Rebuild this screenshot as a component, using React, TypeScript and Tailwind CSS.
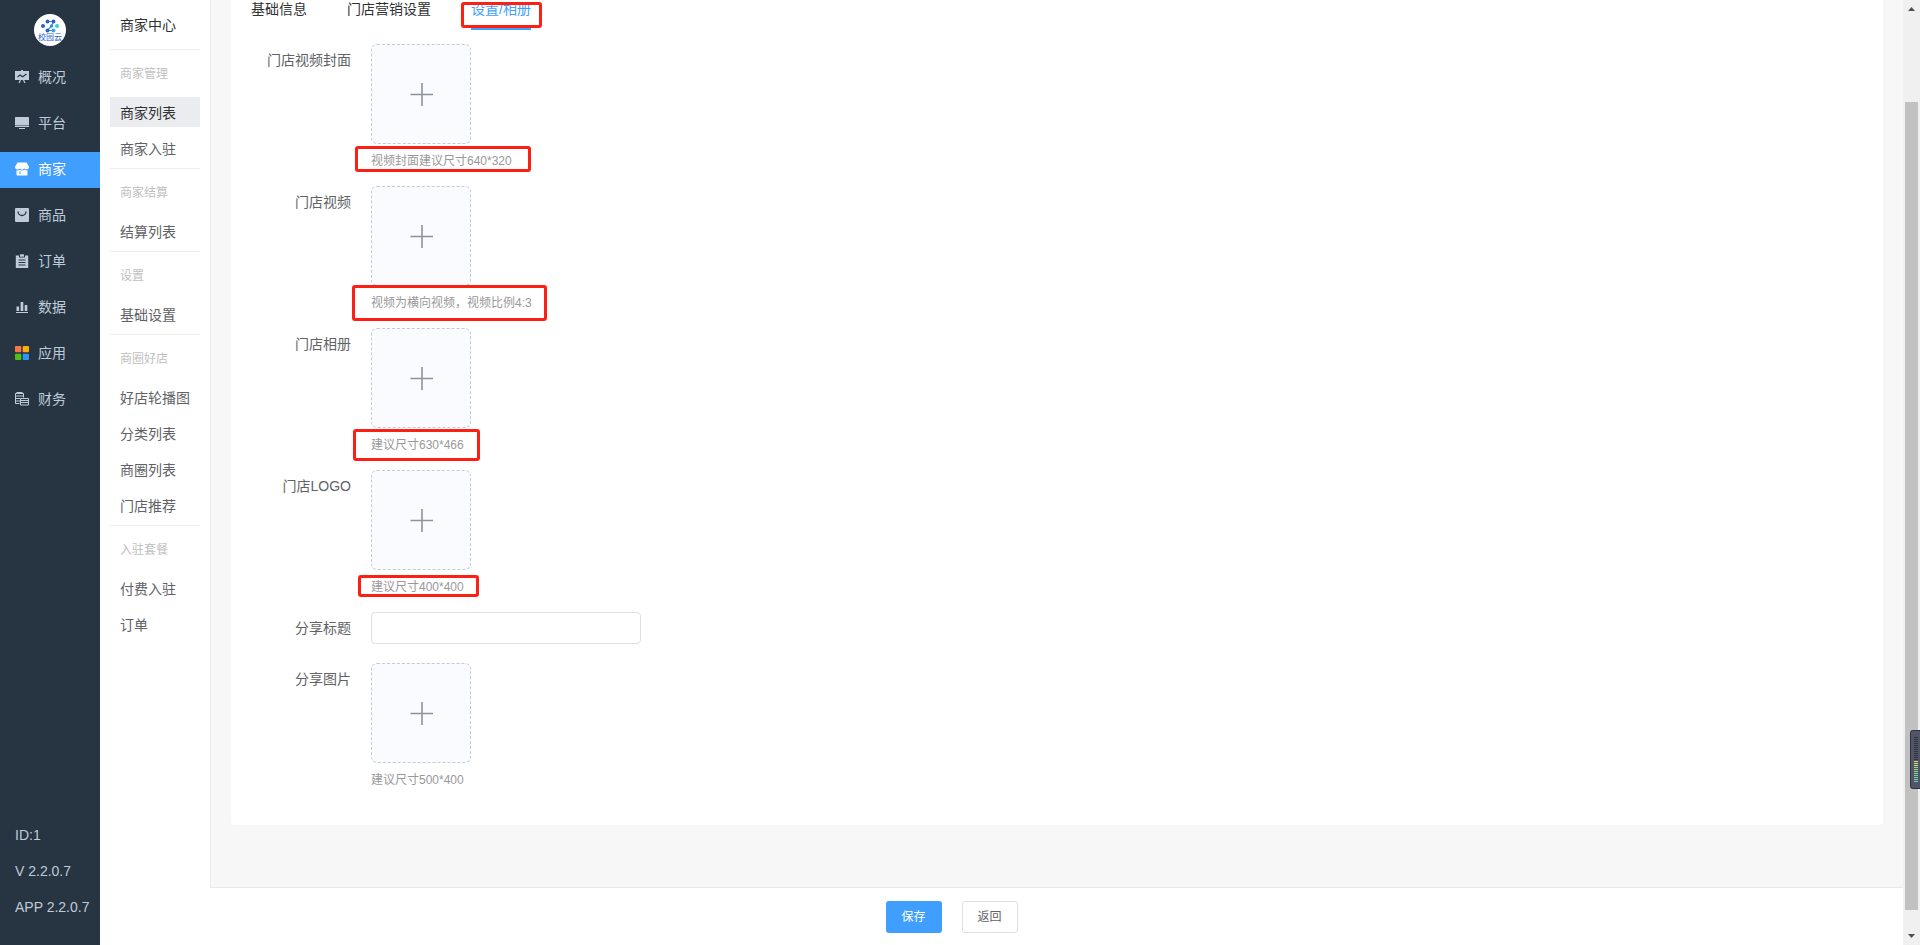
import type { ReactNode } from 'react'
import clsx from 'clsx'

const icons: Record<string, ReactNode> = {
  overview: (
    <>
      <path fill="currentColor" d="M0 1h6V0h2v1h6v9H0z" />
      <path d="M2.5 7l2.5-2 2.5 1.8L11.5 4" fill="none" stroke="#273543" strokeWidth="1.2" />
      <path d="M5.5 10L4 13M8.5 10l1.5 3" fill="none" stroke="currentColor" strokeWidth="1.2" />
    </>
  ),
  platform: (
    <>
      <rect y="1" width="14" height="8" rx="0.6" fill="currentColor" />
      <path fill="currentColor" d="M0 9.6h14V11H0zM4 12h6v1H4z" />
    </>
  ),
  shop: (
    <>
      <path fill="currentColor" d="M2.5.5h9L14 4.7c0 3-3.2 3.4-4.6 1.8-1.3 1.5-3.5 1.5-4.8 0C3.2 8.1 0 7.7 0 4.7z" />
      <path fill="currentColor" fillRule="evenodd" d="M1.5 8.3c1.2.3 2.3 0 3.1-.6 1.5 1 3.3 1 4.8 0 .8.6 1.9.9 3.1.6v4.4c0 .6-.3.8-.8.8H2.3c-.5 0-.8-.3-.8-.8zM4.5 9.3V12h1V9.3z" />
    </>
  ),
  goods: (
    <>
      <rect width="14" height="14" rx="1" fill="currentColor" />
      <path d="M3 3.500a4 4 0 0 0 8 0" fill="none" stroke="#273543" strokeWidth="1.3" />
    </>
  ),
  order: (
    <>
      <path fill="currentColor" d="M.8 1.500H4v2h6v-2h3.200V14H.8z" />
      <path fill="currentColor" d="M5 .3h4v2.400H5z" />
      <path d="M3.500 6h7M3.500 8.500h7M3.500 11h7" stroke="#273543" strokeWidth="1" />
    </>
  ),
  data: (
    <path fill="currentColor" d="M1.500 6.500h2.600V11H1.500zM5.600 2h2.700v9H5.600zM9.700 5h2.600v6H9.700zM1 12h12v1H1z" />
  ),
  app: (
    <>
      <rect width="6.300" height="6.300" rx="1" fill="#ff7446" />
      <rect x="7.700" width="6.300" height="6.300" rx="1" fill="#ffab0b" />
      <rect y="7.700" width="6.300" height="6.300" rx="1" fill="#4cc112" />
      <rect x="7.700" y="7.700" width="6.300" height="6.300" rx="1" fill="#3096f2" />
    </>
  ),
  finance: (
    <g fill="none" stroke="currentColor" strokeWidth="1">
      <path d="M.5 1.500h8v4M.5 1.500v10h4M.5 4h8M.5 6.500H5M.5 9H5" />
      <path d="M5.500 6.500h8v6.500h-8zM5.500 8.500h8M5.500 10.500h8" />
      <path d="M1.500.5h6" />
    </g>
  ),
}

const navItems = [
  { icon: 'overview', label: '概况' },
  { icon: 'platform', label: '平台' },
  { icon: 'shop', label: '商家' },
  { icon: 'goods', label: '商品' },
  { icon: 'order', label: '订单' },
  { icon: 'data', label: '数据' },
  { icon: 'app', label: '应用' },
  { icon: 'finance', label: '财务' },
]

const menuGroups = [
  { title: '商家管理', items: ['商家列表', '商家入驻'] },
  { title: '商家结算', items: ['结算列表'] },
  { title: '设置', items: ['基础设置'] },
  { title: '商圈好店', items: ['好店轮播图', '分类列表', '商圈列表', '门店推荐'] },
  { title: '入驻套餐', items: ['付费入驻', '订单'] },
]

const tabs = ['基础信息', '门店营销设置', '设置/相册']

const uploads = [
  { id: 'cover', label: '门店视频封面', hint: '视频封面建议尺寸640*320', mark: '-left-4 -top-1 w-[176px] h-[26px]' },
  { id: 'video', label: '门店视频', hint: '视频为横向视频，视频比例4:3', mark: '-left-[19px] -top-[7px] w-[195px] h-9' },
  { id: 'album', label: '门店相册', hint: '建议尺寸630*466', mark: '-left-[18px] -top-[5px] w-[127px] h-8' },
  { id: 'logo', label: '门店LOGO', hint: '建议尺寸400*400', mark: '-left-[13px] -top-px w-[121px] h-[22px]' },
]

function Logo() {
  return (
    <svg viewBox="0 0 32 32" className="size-8" role="img" aria-label="校园云">
      <circle cx="16" cy="16" r="16" fill="#fff" />
      <path d="M13.500 7.500h6l-2 4.500-4 4.500h6" fill="none" stroke="#4a86dc" strokeWidth="1.200" />
      <g fill="#2b5fc7">
        <circle cx="13.500" cy="7.500" r="1.900" />
        <circle cx="19.500" cy="7.500" r="1.900" />
        <circle cx="9" cy="12" r="2" />
        <circle cx="13.500" cy="16.500" r="1.900" />
      </g>
      <circle cx="17.500" cy="12" r="1.700" fill="#2f8fdc" />
      <circle cx="19.500" cy="16.500" r="1.900" fill="#35a9e0" />
      <circle cx="23" cy="12" r="2" fill="#3dcfd0" />
      <text x="16" y="26" textAnchor="middle" fontSize="8" fill="#2b62c9">校园云</text>
    </svg>
  )
}

function Sidebar() {
  return (
    <aside className="w-25 shrink-0 bg-[#273543] text-[#bfcbd9] flex flex-col justify-between">
      <div>
        <div className="flex justify-center py-[14px]">
          <Logo />
        </div>
        <nav className="flex flex-col gap-[10px]">
          {navItems.map(item => (
            <a
              key={item.icon}
              href="#"
              className={clsx('flex items-center gap-[9px] h-9 pl-[15px] pb-[2px]', item.icon === 'shop' && 'bg-[#409eff] text-white')}
            >
              <svg viewBox="0 0 14 14" className="size-[14px]" aria-hidden="true">{icons[item.icon]}</svg>
              <span>{item.label}</span>
            </a>
          ))}
        </nav>
      </div>
      <div className="pl-[15px] pb-5 leading-9 whitespace-nowrap">
        <p>ID:1</p>
        <p>V 2.2.0.7</p>
        <p>APP 2.2.0.7</p>
      </div>
    </aside>
  )
}

function SubMenu() {
  return (
    <aside className="w-[110px] shrink-0 bg-white px-[10px]">
      <h1 className="h-[49px] leading-[50px] pl-[10px] text-[#303133]">商家中心</h1>
      {menuGroups.map(group => (
        <section key={group.title} className="border-t border-[#ededed] pb-[5px]">
          <h2 className="h-[47px] leading-[49px] pl-[10px] text-xs text-[#bfbfbf]">{group.title}</h2>
          <ul className="flex flex-col gap-[6px]">
            {group.items.map(item => (
              <li key={item}>
                <a
                  href="#"
                  className={clsx(
                    'block h-[30px] leading-8 pl-[10px] whitespace-nowrap',
                    item === '商家列表' ? 'bg-[#ebecf0] text-[#303133]' : 'text-[#606266]',
                  )}
                >
                  {item}
                </a>
              </li>
            ))}
          </ul>
        </section>
      ))}
    </aside>
  )
}

function Mark({ className }: { className: string }) {
  return <span className={clsx('absolute border-3 border-[#fe1f14] rounded-[3px] pointer-events-none', className)} />
}

function FormRow({ id, label, children }: { id: string; label: string; children: ReactNode }) {
  return (
    <div className="flex gap-5">
      <label htmlFor={id} className="w-25 shrink-0 text-right leading-8 text-[#606266]">{label}</label>
      <div>{children}</div>
    </div>
  )
}

function UploadRow({ id, label, hint, mark }: { id: string; label: string; hint: string; mark?: string }) {
  return (
    <FormRow id={id} label={label}>
      <button
        id={id}
        type="button"
        className="flex items-center justify-center size-25 rounded-md border border-dashed border-[#c0ccda] bg-[#fafbff]"
      >
        <svg viewBox="0 0 24 24" className="size-6" aria-hidden="true">
          <path d="M1.500 12.500H24M13 1v23" stroke="#8c939d" strokeWidth="1.600" fill="none" />
        </svg>
      </button>
      <p className="relative mt-[6px] h-5 text-xs leading-[22px] text-[#999]">
        {hint}
        {mark && <Mark className={mark} />}
      </p>
    </FormRow>
  )
}

function ScrollBar() {
  return (
    <div className="w-[17px] shrink-0 bg-[#f0f0f0] flex flex-col items-center" aria-hidden="true">
      <svg viewBox="0 0 17 17" className="size-[17px]">
        <path fill="#505050" d="M5 11h7L8.500 7z" />
      </svg>
      <div className="h-[85px]" />
      <div className="flex-1 w-[13px] bg-[#c1c1c1]" />
      <div className="h-[18px]" />
      <svg viewBox="0 0 17 17" className="size-[17px]">
        <path fill="#505050" d="M5 6h7l-3.500 4z" />
      </svg>
    </div>
  )
}

// floating level meter docked to the window's right edge
function LevelMeter() {
  return (
    <svg viewBox="0 0 10 59" className="absolute right-0 top-[730px] w-[10px] h-[59px]" aria-hidden="true">
      <rect x="0.500" y="0.500" width="12" height="58" rx="2" fill="#505666" stroke="#2e323e" />
      {Array.from({ length: 23 }, (_, i) => (
        <rect
          key={i}
          x="4"
          y={7 + i * 2}
          width="4"
          height="1"
          fill={i < 12 ? '#2e323e' : i < 15 ? '#d3e07a' : i < 19 ? '#93d98c' : '#6fd3b8'}
        />
      ))}
    </svg>
  )
}

export default function App() {
  return (
    <div className="relative flex h-screen overflow-hidden bg-white text-sm font-['Liberation_Sans','Noto_Sans_CJK_SC',sans-serif]">
      <Sidebar />
      <SubMenu />
      <main className="flex-1 min-w-0 flex flex-col">
        <div className="flex-1 min-h-0 overflow-hidden border-l border-[#ededed] bg-[#f7f7f7] px-5">
          <div className="bg-white rounded-b px-5 pb-9">
            <div role="tablist" className="flex gap-10 h-[30px] text-[#303133]">
              {tabs.map((tab, i) => (
                <button
                  key={tab}
                  type="button"
                  role="tab"
                  aria-selected={i === 2}
                  className={clsx(
                    'relative h-[30px] pb-[10px] leading-[18px] border-b-2',
                    i === 2 ? 'border-[#409eff] text-[#409eff]' : 'border-transparent',
                  )}
                >
                  {tab}
                  {i === 2 && <Mark className="-left-[10px] top-[2px] w-[81px] h-[26px]" />}
                </button>
              ))}
            </div>
            <form className="flex flex-col gap-4 pt-[14px]">
              {uploads.map(item => <UploadRow key={item.id} {...item} />)}
              <div className="min-h-[35px]">
                <FormRow id="share-title" label="分享标题">
                  <input
                    id="share-title"
                    type="text"
                    className="block w-[270px] h-8 px-[15px] rounded border border-[#dcdfe6] bg-white outline-none"
                  />
                </FormRow>
              </div>
              <UploadRow id="share-image" label="分享图片" hint="建议尺寸500*400" />
            </form>
          </div>
        </div>
        <footer className="flex items-center justify-center gap-5 h-[58px] pr-[210px] border-t border-[#e8e8e8] bg-white text-xs">
          <button type="button" className="w-14 h-8 rounded-[3px] bg-[#409eff] text-white">保存</button>
          <button type="button" className="w-14 h-8 rounded-[3px] border border-[#dcdfe6] bg-white text-[#606266]">返回</button>
        </footer>
      </main>
      <ScrollBar />
      <LevelMeter />
    </div>
  )
}
